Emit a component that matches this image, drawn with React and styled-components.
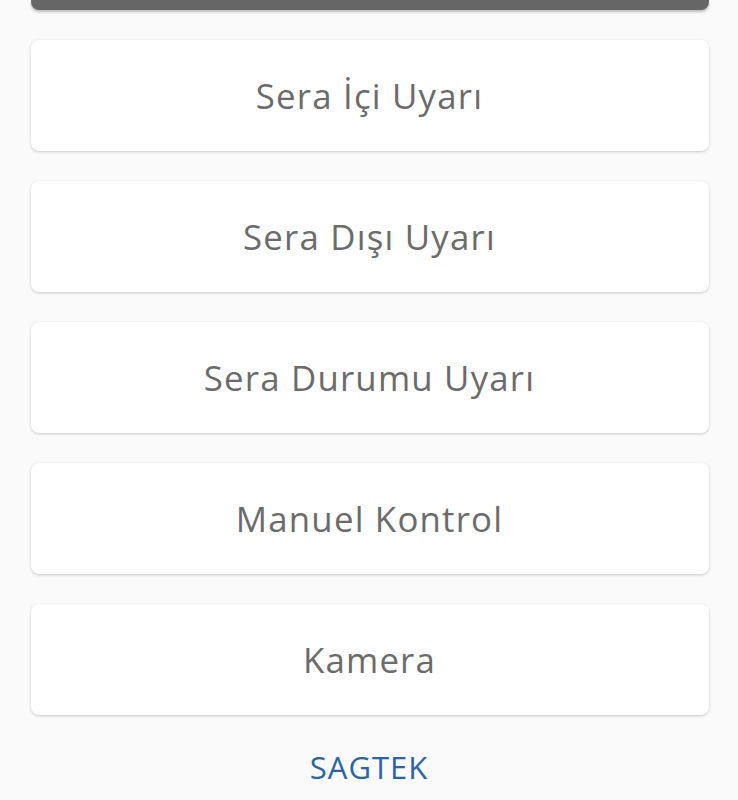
import React from 'react';
import styled, { createGlobalStyle } from 'styled-components';

const GlobalStyle = createGlobalStyle`
  html, body {
    margin: 0;
    padding: 0;
    background: #fafafa;
    font-family: "Open Sans", "Noto Sans", sans-serif;
  }
`;

const Page = styled.div`
  width: 738px;
  height: 800px;
  overflow: hidden;
  background: #fafafa;
  display: flex;
  flex-direction: column;
  align-items: center;
`;

const TopBar = styled.div`
  width: 678px;
  height: 10px;
  margin-left: 1px;
  background: #666666;
  border-radius: 0 0 8px 8px;
  box-shadow: 0 2px 3px rgba(0, 0, 0, 0.25);
`;

const List = styled.div`
  display: flex;
  flex-direction: column;
  gap: 30px;
  margin-top: 30px;
`;

const Card = styled.button`
  width: 678px;
  height: 111px;
  margin-left: 1px;
  border: none;
  background: #ffffff;
  border-radius: 8px;
  box-shadow: 0 1px 3px rgba(0, 0, 0, 0.2);
  display: flex;
  align-items: center;
  justify-content: center;
  font-family: "Open Sans", "Noto Sans", sans-serif;
  font-size: 34.8px;
  font-weight: 400;
  letter-spacing: 1.2px;
  color: #6b6b6b;
  padding: 0;
  cursor: pointer;
`;

const Brand = styled.div`
  margin-top: 31px;
  font-family: "Open Sans", "Noto Sans", sans-serif;
  font-size: 31px;
  color: #2b64a6;
  letter-spacing: 1px;
`;

const items = ['Sera İçi Uyarı', 'Sera Dışı Uyarı', 'Sera Durumu Uyarı', 'Manuel Kontrol', 'Kamera'];

export default function App() {
  return (
    <Page>
      <GlobalStyle />
      <TopBar />
      <List>
        {items.map(label => (
          <Card key={label}>{label}</Card>
        ))}
      </List>
      <Brand>SAGTEK</Brand>
    </Page>
  );
}
